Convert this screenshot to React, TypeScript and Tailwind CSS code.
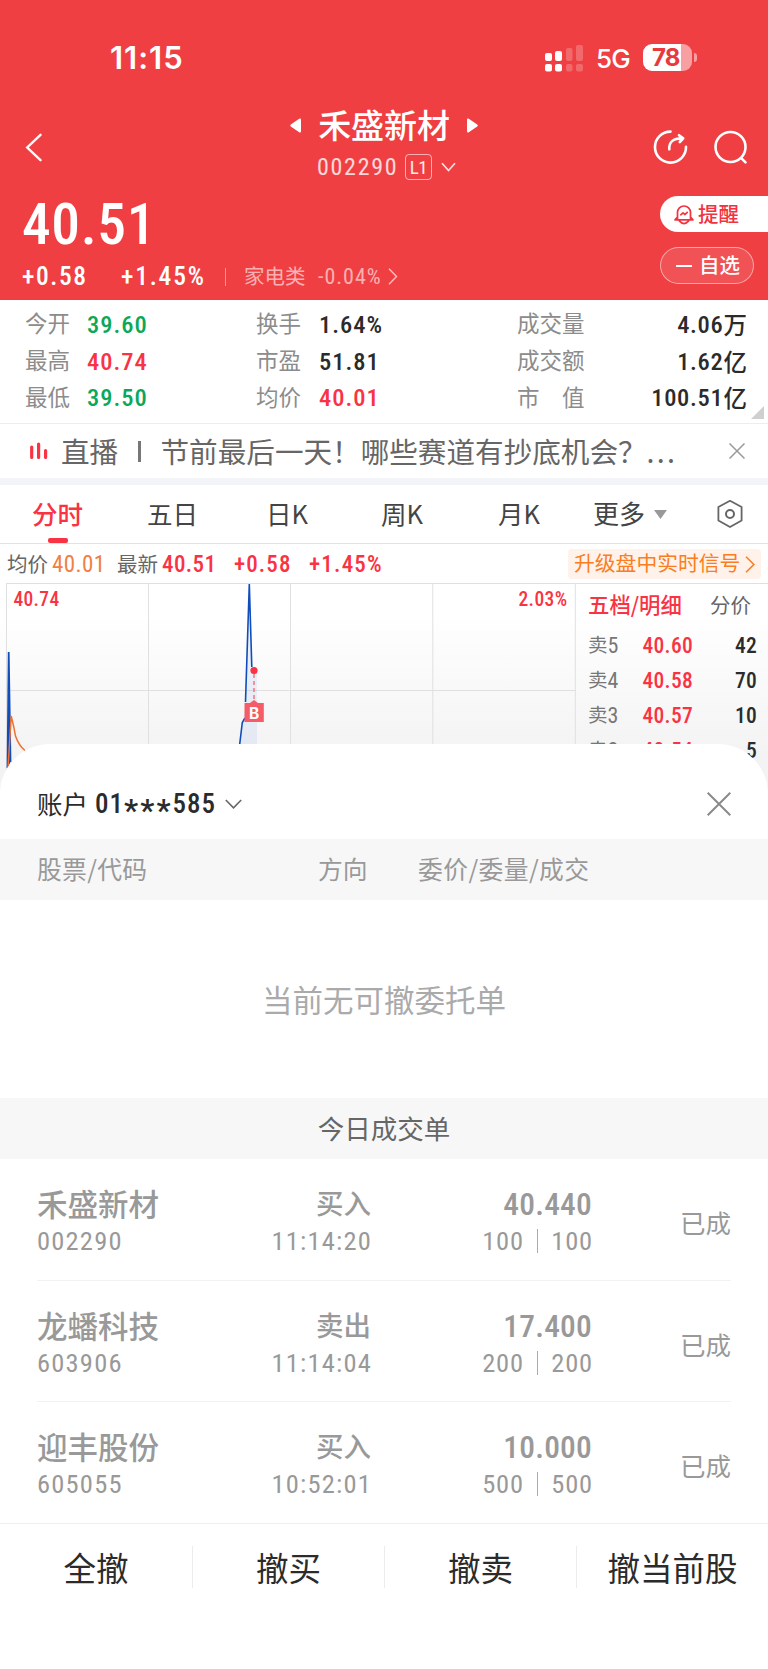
import type { ReactNode } from "react";
import clsx from "clsx";

const cn = clsx;

// Condensed figures used for every price / code
const Num = ({ className, children }: { className?: string; children: ReactNode }) => (
  <span className={cn("font-['Roboto','Noto_Sans_CJK_SC',sans-serif] whitespace-nowrap [font-stretch:80%]", className)}>
    {children}
  </span>
);

const stats = [
  ["今开", "39.60", "text-[#0aa858]", "换手", "1.64%", "text-[#2b2b2b]", "成交量", "4.06", "万"],
  ["最高", "40.74", "text-[#fa3344]", "市盈", "51.81", "text-[#2b2b2b]", "成交额", "1.62", "亿"],
  ["最低", "39.50", "text-[#0aa858]", "均价", "40.01", "text-[#fa3344]", "市　值", "100.51", "亿"],
];

const asks = [
  { level: "5", price: "40.60", volume: "42" },
  { level: "4", price: "40.58", volume: "70" },
  { level: "3", price: "40.57", volume: "10" },
  { level: "2", price: "40.54", volume: "5" },
];

const deals = [
  { name: "禾盛新材", code: "002290", side: "买入", time: "11:14:20", price: "40.440", qty: "100" },
  { name: "龙蟠科技", code: "603906", side: "卖出", time: "11:14:04", price: "17.400", qty: "200" },
  { name: "迎丰股份", code: "605055", side: "买入", time: "10:52:01", price: "10.000", qty: "500" },
];

const StatusBar = () => (
  <div className="flex h-[115px] items-center pl-[110px] font-['Inter',sans-serif] text-white">
    <span className="w-[434px] text-[31px] font-semibold leading-none tracking-[1px]">11:15</span>
    <svg width="40" height="28" viewBox="0 0 40 28" className="shrink-0" fill="white">
      <rect x="1" y="9" width="7" height="8" rx="2" />
      <rect x="11" y="7" width="7" height="10" rx="2" />
      <rect x="22" y="4" width="6.5" height="13" rx="2" opacity=".22" />
      <rect x="32" y="1" width="7" height="16" rx="2" opacity=".22" />
      <rect x="1" y="20" width="7" height="7.5" rx="2" />
      <rect x="11" y="20" width="7" height="7.5" rx="2" />
      <rect x="22" y="20" width="6.5" height="7.5" rx="2" opacity=".22" />
      <rect x="32" y="20" width="7" height="7.5" rx="2" opacity=".22" />
    </svg>
    <span className="ml-[12px] w-[47px] pt-[2px] text-[26px] font-medium leading-none tracking-[-0.8px]">5G</span>
    <div className="flex h-[27px] w-[49px] items-center overflow-hidden rounded-[9px] bg-[linear-gradient(90deg,#fff_38px,#f89fa2_38px)]">
      <span className="ml-[9px] text-[24px] font-bold leading-none tracking-[-0.8px] text-[#e8393d]">78</span>
    </div>
    <div className="ml-[2px] h-[9px] w-[3px] rounded-r-full bg-[#f89fa2]" />
  </div>
);

const TitleBar = () => (
  <div className="flex h-[75px] items-start">
    <svg width="17" height="29" viewBox="0 0 17 29" className="ml-[25px] mt-[18px] shrink-0" fill="none" stroke="white" strokeWidth="2.4" strokeLinecap="round">
      <path d="M15.5 1.8 2.2 14.5 15.5 27.2" />
    </svg>
    <div className="ml-[248px] w-[188px] shrink-0">
      <div className="flex h-[38px] items-center justify-between -mt-[10px]">
        <svg width="11" height="15" viewBox="0 0 11 15" fill="white" className="mt-[3px]">
          <path d="M9.2.7Q11 0 11 1.8V13.2Q11 15 9.2 14.2L.8 8.5Q-.3 7.5.8 6.5Z" />
        </svg>
        <span className="text-[33px] font-medium leading-[38px] tracking-[-0.1px] text-white">禾盛新材</span>
        <svg width="11" height="15" viewBox="0 0 11 15" fill="white" className="mt-[3px]">
          <path d="M1.8.7Q0 0 0 1.8V13.2Q0 15 1.8 14.2L10.2 8.5Q11.3 7.5 10.2 6.5Z" />
        </svg>
      </div>
      <div className="mt-[10px] flex h-[27px] items-center pl-[27px]">
        <Num className="w-[88px] text-[24px] leading-none tracking-[1.7px] text-white/80">002290</Num>
        <span className="flex h-[26px] w-[27px] shrink-0 items-center justify-center rounded-[4px] border border-white/60 pt-px font-['Roboto',sans-serif] text-[19px] leading-none tracking-[-0.5px] text-white/90 [font-stretch:85%]">
          L1
        </span>
        <svg width="15" height="10" viewBox="0 0 15 10" className="ml-[9px] shrink-0" fill="none" stroke="white" strokeOpacity=".85" strokeWidth="1.7">
          <path d="M1 1.2 7.5 8.5 14 1.2" />
        </svg>
      </div>
    </div>
    <svg width="36" height="36" viewBox="0 0 36 36" className="ml-[175px] mt-[14px] shrink-0" fill="none" stroke="white" strokeWidth="2.6" strokeLinecap="round" strokeLinejoin="round">
      <path d="M17.5 2.6A15.5 15.5 0 1 0 33 17.8" />
      <path d="M16.3 20.3C15.8 13 20 9.4 29 9.4M26 6.2 30.2 9.4 26.8 13" />
    </svg>
    <svg width="36" height="36" viewBox="0 0 36 36" className="ml-[24px] mt-[14px] shrink-0" fill="none" stroke="white" strokeWidth="2.6" strokeLinecap="round">
      <circle cx="17.5" cy="18" r="15" />
      <path d="M28.5 29.3 32.5 33.3" />
    </svg>
  </div>
);

const Quote = () => (
  <div className="flex h-[110px]">
    <div className="w-[660px] pl-[22px]">
      <div className="flex h-[69px] items-center">
        <Num className="text-[57.5px] font-medium leading-none tracking-[0.6px] text-white">40.51</Num>
      </div>
      <div className="-mt-px flex h-[37px] items-center text-white">
        <Num className="w-[99px] text-[25.5px] font-medium leading-none tracking-[1.6px]">+0.58</Num>
        <Num className="w-[104px] text-[25.5px] font-medium leading-none tracking-[1.8px]">+1.45%</Num>
        <div className="h-[18px] w-px bg-white/45" />
        <span className="-mt-[4px] ml-[18px] w-[74px] text-[20.5px] leading-[24px] text-white/60">家电类</span>
        <Num className="w-[70px] text-[22px] leading-none tracking-[1px] text-white/60">-0.04%</Num>
        <svg width="10" height="17" viewBox="0 0 10 17" fill="none" stroke="white" strokeOpacity=".65" strokeWidth="1.5">
          <path d="M1 .8 8.5 8.5 1 16.2" />
        </svg>
      </div>
    </div>
    <div className="w-[108px] pt-[6px]">
      <div className="flex h-[36px] items-center rounded-l-full bg-white pl-[14px] text-[#f2333f]">
        <svg width="20" height="21" viewBox="0 0 20 21" fill="none" stroke="currentColor" strokeWidth="1.7" strokeLinejoin="round" strokeLinecap="round">
          <path d="M3.5 15.5V8.5a6.5 6.5 0 0 1 13 0v7M1 15.8h18l-2.5-2.8M1 15.8 3.5 13M5.5 17.2Q10 22 14.5 17.2M6.8 10.8 9 8.8 11 10.5 13.2 8.3" />
        </svg>
        <span className="-mt-[3px] ml-[4px] text-[20.5px] font-medium leading-[24px]">提醒</span>
      </div>
      <div className="mt-[15px] flex h-[37px] w-[94px] items-center rounded-full border border-white/50 bg-white/10 pl-[15px] text-white">
        <div className="h-[2px] w-[16px] bg-white" />
        <span className="-mt-[3px] ml-[7px] text-[20.5px] font-medium leading-[24px]">自选</span>
      </div>
    </div>
  </div>
);

const Stats = () => (
  <div className="relative h-[124px] border-b border-[#ededf0] pt-[7px]">
    {stats.map(([a, av, ac, b, bv, bc, c, cv, unit]) => (
      <div key={a} className="flex h-[36.7px] items-center pl-[25px] pr-[21px] text-[22.5px] text-[#8c8c8c]">
        <span className="-mt-[6px] w-[62px] leading-[30px]">{a}</span>
        <Num className={cn("w-[169px] text-[24.5px] font-medium leading-none tracking-[1px]", ac)}>{av}</Num>
        <span className="-mt-[6px] w-[63px] leading-[30px]">{b}</span>
        <Num className={cn("w-[198px] text-[24.5px] font-medium leading-none tracking-[1px]", bc)}>{bv}</Num>
        <span className="-mt-[6px] leading-[30px]">{c}</span>
        <span className="ml-auto flex items-center text-[#2b2b2b]">
          <Num className="text-[24.5px] font-medium leading-none tracking-[0.7px]">{cv}</Num>
          <span className="-mt-[3px] text-[23.5px] font-medium leading-[30px]">{unit}</span>
        </span>
      </div>
    ))}
    <svg width="13" height="13" viewBox="0 0 13 13" className="absolute bottom-[4px] right-[4px]" fill="#cfcfcf">
      <path d="M13 0V13H0Z" />
    </svg>
  </div>
);

const LiveBanner = () => (
  <div className="flex h-[61px] items-center border-b-[7px] border-[#f2f4f8] pl-[30px] text-[28.6px] text-[#666]">
    <svg width="18" height="18" viewBox="0 0 18 18" className="shrink-0" stroke="#fa3344" strokeWidth="3.2" strokeLinecap="round">
      <path d="M1.7 5V15.5M8.6 2V15.5M15.6 8.5V15.5" />
    </svg>
    <span className="ml-[13px] w-[77px] leading-[36px]">直播</span>
    <div className="h-[21px] w-[2.5px] bg-[#777]" />
    <span className="ml-[20px] w-[568px] whitespace-nowrap leading-[36px]">
      节前最后一天！哪些赛道有抄底机会？<span className="tracking-[2.2px]">...</span>
    </span>
    <svg width="16" height="16" viewBox="0 0 16 16" className="shrink-0" stroke="#999" strokeWidth="1.5">
      <path d="M.5.5 15.5 15.5M15.5.5.5 15.5" />
    </svg>
  </div>
);

const Tabs = () => (
  <div className="flex h-[59px] items-center border-b border-[#e2e2e4] text-[25.5px] leading-[36px] text-[#444]">
    <div className="relative ml-[32px] flex h-full w-[115px] items-center pb-[2px] font-medium text-[#fa3344]">
      分时
      <div className="absolute bottom-0 left-[16px] h-[5px] w-[20px] rounded-[2px] bg-[#fa3344]" />
    </div>
    <span className="-mt-[2px] w-[119px]">五日</span>
    <span className="-mt-[2px] w-[115px]">日K</span>
    <span className="-mt-[2px] w-[117px]">周K</span>
    <span className="-mt-[2px] w-[95px]">月K</span>
    <span className="-mt-[2px] w-[61px] text-[26px]">更多</span>
    <svg width="13" height="9" viewBox="0 0 13 9" fill="#999">
      <path d="M0 0H13L6.5 9Z" />
    </svg>
    <svg width="28" height="30" viewBox="0 0 28 30" className="ml-[49px]" fill="none" stroke="#666" strokeWidth="1.8" strokeLinejoin="round">
      <path d="M14 1.8 25.600 8V21.500L14 28 2.400 21.500V8Z" />
      <circle cx="14" cy="15" r="4" strokeWidth="2" />
    </svg>
  </div>
);

const PriceLine = () => (
  <div className="flex h-[39px] items-center pl-[7px] pt-px text-[20.5px] text-[#666]">
    <span className="-mt-[3px] w-[45px] leading-[28px]">均价</span>
    <Num className="w-[65px] text-[23px] leading-none tracking-[0.4px] text-[#f08045]">40.01</Num>
    <span className="-mt-[3px] w-[45px] leading-[28px]">最新</span>
    <Num className="w-[72px] text-[23px] font-medium leading-none tracking-[0.4px] text-[#fa3344]">40.51</Num>
    <Num className="w-[75px] text-[23px] font-medium leading-none tracking-[1.1px] text-[#fa3344]">+0.58</Num>
    <Num className="text-[23px] font-medium leading-none tracking-[1.2px] text-[#fa3344]">+1.45%</Num>
    <div className="ml-auto mr-[7px] flex h-[30px] w-[193px] shrink-0 items-center rounded-[4px] bg-[#fff2ea] pl-[6px] text-[20.8px] leading-[28px] text-[#fb7d22]">
      <span className="-mt-[4px] w-[171px] whitespace-nowrap">升级盘中实时信号</span>
      <svg width="10" height="17" viewBox="0 0 10 17" fill="none" stroke="currentColor" strokeWidth="1.6">
        <path d="M1 .8 8.8 8.5 1 16.2" />
      </svg>
    </div>
  </div>
);

const Chart = () => (
  <svg width="576" height="217" viewBox="0 583 576 217" className="shrink-0">
    <path d="M6.5 583V800M148.5 583V800M290.5 583V800M432.8 583V800M575.3 583V800M6 583.5H576M6 690.5H576" stroke="#e0e0e2" fill="none" />
    <path d="M239 800V744L243 721 246 700 249 584 252 667 257 672V800Z" fill="#2a66e0" fillOpacity=".08" />
    <path d="M7.5 768 8.7 652 10.5 762" fill="#0f4dbb" stroke="#0f4dbb" strokeWidth="1.8" />
    <path d="M8 768 11.2 716Q14 727 15.5 736 19 746 25 750.5" fill="none" stroke="#f26f30" strokeWidth="1.5" />
    <path d="M239.5 746 242.3 722.5 245 718M245.5 702 249.3 584 251.8 667" fill="none" stroke="#0f4dbb" strokeWidth="1.6" />
    <path d="M254 674V702" stroke="#f6636c" strokeWidth="1.3" strokeDasharray="4 3" />
    <circle cx="254" cy="670.5" r="3.6" fill="#fa3344" />
    <path d="M244.5 703H250L254 700 258 703H263.8V722H244.5Z" fill="#f65c68" />
    <text x="254.2" y="718.5" textAnchor="middle" className="fill-white font-['Inter',sans-serif] text-[15.5px] font-bold">B</text>
    <text x="13.5" y="606" className="fill-[#fa3344] font-['Roboto',sans-serif] text-[19.5px] font-medium tracking-[0.3px] [font-stretch:80%]">40.74</text>
    <text x="567.5" y="606" textAnchor="end" className="fill-[#fa3344] font-['Roboto',sans-serif] text-[19.5px] font-medium tracking-[0.4px] [font-stretch:80%]">2.03%</text>
  </svg>
);

const OrderBook = () => (
  <div className="w-[192px] border-t border-[#e0e0e2] pl-[12px] pr-[11px]">
    <div className="flex h-[44px] items-center text-[21.4px] leading-[28px]">
      <span className="-mt-[5px] w-[122px] whitespace-nowrap font-medium text-[#fa3344]">五档/明细</span>
      <span className="-mt-[5px] whitespace-nowrap text-[20.5px] text-[#666]">分价</span>
    </div>
    {asks.map((ask) => (
      <div key={ask.level} className="flex h-[35px] items-center text-[19.5px] text-[#777]">
        <span className="-mt-[3px] leading-[28px]">卖</span>
        <Num className="w-[35px] text-[22px] leading-none">{ask.level}</Num>
        <Num className="text-[21.5px] font-medium leading-none tracking-[0.3px] text-[#fa3344]">{ask.price}</Num>
        <Num className="ml-auto text-[21.5px] font-medium leading-none tracking-[0.3px] text-[#2b2b2b]">{ask.volume}</Num>
      </div>
    ))}
  </div>
);

const DealRow = ({ deal }: { deal: (typeof deals)[number] }) => (
  <div className="mx-[37px] flex h-[121px] items-start border-b border-[#f2f2f2] pt-[24px] text-[#999] first-of-type:h-[122px] last:border-transparent">
    <div className="w-[180px]">
      <div className="h-[40px] text-[30.5px] font-medium leading-[40px]">{deal.name}</div>
      <Num className="flex h-[36px] items-center text-[26.5px] leading-none tracking-[1.2px]">{deal.code}</Num>
    </div>
    <div className="flex w-[154px] flex-col items-end">
      <div className="h-[40px] text-[27.5px] font-medium leading-[38px]">{deal.side}</div>
      <Num className="-mr-px flex h-[36px] items-center text-[26.5px] leading-none tracking-[1.2px]">{deal.time}</Num>
    </div>
    <div className="flex w-[221px] flex-col items-end">
      <Num className="flex h-[40px] items-center pt-[4px] text-[31.5px] font-medium leading-none tracking-[0.2px]">{deal.price}</Num>
      <div className="-mr-px flex h-[36px] items-center">
        <Num className="text-[26.5px] leading-none tracking-[0.8px]">{deal.qty}</Num>
        <div className="mx-[13px] h-[24px] w-[1.5px] bg-[#aaa]" />
        <Num className="text-[26.5px] leading-none tracking-[0.8px]">{deal.qty}</Num>
      </div>
    </div>
    <div className="ml-auto pt-[21px] text-[25.5px] leading-[36px]">已成</div>
  </div>
);

const OrderSheet = () => (
  <div className="relative -mt-[56px] flex h-[925px] flex-col rounded-t-[50px] bg-white">
    <div className="flex h-[94.5px] shrink-0 items-center pl-[37px] pt-[26px] text-[#2b2b2b]">
      <span className="-mt-[2px] w-[58px] text-[25.5px] leading-[36px]">账户</span>
      <span className="flex w-[130px] items-center">
        <Num className="text-[27px] font-medium leading-none tracking-[1px]">01</Num>
        <Num className="pt-[12px] text-[32px] font-medium leading-none tracking-[2px]">***</Num>
        <Num className="text-[27px] font-medium leading-none tracking-[1px]">585</Num>
      </span>
      <svg width="17" height="10" viewBox="0 0 17 10" fill="none" stroke="#666" strokeWidth="1.6">
        <path d="M.8 1 8.5 8.8 16.2 1" />
      </svg>
      <svg width="24" height="24" viewBox="0 0 24 24" className="ml-auto mr-[37px]" stroke="#8a8a8a" strokeWidth="2">
        <path d="M.7.7 23.3 23.3M23.3.7.7 23.3" />
      </svg>
    </div>
    <div className="flex h-[61.5px] shrink-0 items-center bg-[#f7f7f7] pl-[37px] text-[24.8px] leading-[34px] text-[#999]">
      <span className="-mt-[3px] w-[281px] tracking-[0.3px]">股票/代码</span>
      <span className="-mt-[3px] w-[100px]">方向</span>
      <span className="-mt-[3px] tracking-[0.4px]">委价/委量/成交</span>
    </div>
    <div className="flex h-[198px] shrink-0 items-center justify-center text-[30.5px] leading-[40px] text-[#aaa]">
      当前无可撤委托单
    </div>
    <div className="flex h-[61px] shrink-0 items-center justify-center bg-[#f7f7f7] pb-[2px] text-[26.5px] leading-[36px] text-[#666]">
      今日成交单
    </div>
    <div>
      {deals.map((deal) => (
        <DealRow key={deal.code} deal={deal} />
      ))}
    </div>
    <div className="grid h-[146px] grid-cols-4 border-t-[1.5px] border-[#eee] pt-[22px] text-center text-[32.5px] leading-[42px] text-[#2b2b2b]">
      {["全撤", "撤买", "撤卖", "撤当前股"].map((label, i) => (
        <div key={label} className={cn("h-[42px] whitespace-nowrap", i > 0 && "border-l border-[#ececec]")}>
          {label}
        </div>
      ))}
    </div>
  </div>
);

const App = () => {
  return (
    <div className="h-[1669px] w-[768px] overflow-hidden bg-white font-['Noto_Sans_CJK_SC',sans-serif]">
      <div className="h-[300px] bg-[#ef3f42]">
        <StatusBar />
        <TitleBar />
        <Quote />
      </div>
      <Stats />
      <LiveBanner />
      <Tabs />
      <PriceLine />
      <div className="flex h-[217px] bg-[linear-gradient(180deg,#fff_15%,#f3f3f3_80%)]">
        <Chart />
        <OrderBook />
      </div>
      <OrderSheet />
    </div>
  );
};

export default App;
